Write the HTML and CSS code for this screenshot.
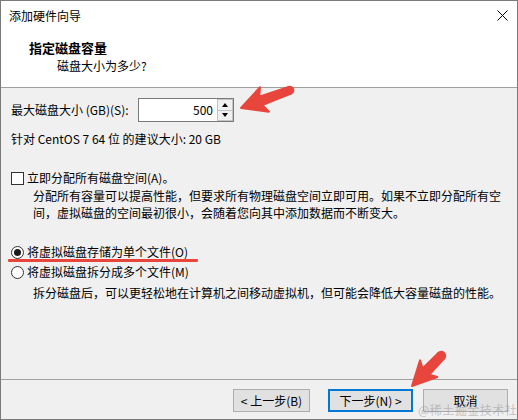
FILE: index.html
```html
<!DOCTYPE html>
<html lang="zh-CN">
<head>
    <meta charset="UTF-8">
    <link rel="stylesheet" href="styles.css">
</head>
<body>
    <div class="window">
        <div class="titlebar">
            <span class="title">添加硬件向导</span>
            <svg class="close-icon" width="11" height="11" viewBox="0 0 11 11">
                <path d="M0.5 0.5 L10.5 10.5 M10.5 0.5 L0.5 10.5" stroke="#000" stroke-width="1"/>
            </svg>
        </div>

        <div class="header">
            <div class="heading">指定磁盘容量</div>
            <div class="subheading">磁盘大小为多少?</div>
        </div>

        <div class="content">
            <div class="size-row">
                <span class="size-label">最大磁盘大小 (GB)(S):</span>
                <div class="spin">
                    <div class="spin-value">500</div>
                    <div class="spin-buttons">
                        <span class="spin-btn"><i class="tri-up"></i></span>
                        <span class="spin-btn"><i class="tri-down"></i></span>
                    </div>
                </div>
            </div>
            <div class="hint">针对 CentOS 7 64 位 的建议大小: 20 GB</div>

            <div class="option check-option">
                <span class="checkbox"></span>立即分配所有磁盘空间(A)。
            </div>
            <p class="desc">分配所有容量可以提高性能，但要求所有物理磁盘空间立即可用。如果不立即分配所有空<br>间，虚拟磁盘的空间最初很小，会随着您向其中添加数据而不断变大。</p>

            <div class="option radio-option first-radio">
                <span class="radio checked"></span>将虚拟磁盘存储为单个文件(O)
            </div>
            <div class="option radio-option">
                <span class="radio"></span>将虚拟磁盘拆分成多个文件(M)
            </div>
            <p class="desc desc-split">拆分磁盘后，可以更轻松地在计算机之间移动虚拟机，但可能会降低大容量磁盘的性能。</p>
        </div>

        <div class="footer">
            <button class="btn btn-back">&lt; 上一步(B)</button>
            <button class="btn btn-next">下一步(N) &gt;</button>
            <button class="btn btn-cancel">取消</button>
        </div>
    </div>

    <!-- red marks drawn over the screenshot -->
    <svg class="annotations" width="518" height="420" viewBox="0 0 518 420">
        <g fill="#e8453c" stroke="#e8453c" stroke-width="2" stroke-linejoin="round">
            <g transform="translate(241 108) rotate(-20)">
                <polygon points="0,0 25,-13 21,-4.5 52,-3.5 52,3.5 21,4.5 25,13"/>
                <circle cx="52" cy="0" r="3.5"/>
            </g>
            <g transform="translate(412 386) rotate(-46)">
                <polygon points="0,0 24,-12 20,-4.5 42,-4 42,4 20,4.5 24,12"/>
                <circle cx="42" cy="0" r="4"/>
            </g>
        </g>
        <rect x="8" y="259" width="190" height="3" rx="1" fill="#e8453c"/>
    </svg>

    <div class="watermark">@稀土掘金技术社区</div>
</body>
</html>
```

FILE: styles.css
```css
* {
    margin: 0;
    padding: 0;
    box-sizing: border-box;
}

body {
    font-family: "Noto Sans CJK SC", "Noto Sans", sans-serif;
    font-size: 12px;
    color: #000;
    background: #fff;
    width: 518px;
    height: 420px;
    overflow: hidden;
    position: relative;
}

.window {
    width: 518px;
    height: 420px;
    border: 1px solid #7a7a7a;
    display: flex;
    flex-direction: column;
    background: #f0f0f0;
}

.titlebar {
    height: 29px;
    display: flex;
    align-items: center;
    padding: 0 9px 0 8px;
    background: #fff;
    line-height: 18px;
}

.close-icon {
    margin-left: auto;
    margin-top: 0;
}

.header {
    height: 58px;
    background: #fff;
    border-bottom: 1px solid #a0a0a0;
    padding-top: 9px;
    line-height: 18px;
}

.heading {
    font-weight: bold;
    font-size: 13px;
    padding-left: 28px;
}

.subheading {
    padding-left: 56px;
}

.content {
    flex: 1;
    padding: 10px 10px 0 10px;
    line-height: 18px;
}

.size-row {
    display: flex;
    align-items: center;
    height: 24px;
}

.size-label {
    width: 127px;
}

.spin {
    display: flex;
    width: 96px;
    height: 24px;
    border: 1px solid #7a7a7a;
    background: #fff;
}

.spin-value {
    flex: 1;
    text-align: right;
    padding-right: 4px;
    line-height: 22px;
}

.spin-buttons {
    width: 16px;
    display: flex;
    flex-direction: column;
}

.spin-btn {
    flex: 1;
    display: flex;
    align-items: center;
    justify-content: center;
    background: #f0f0f0;
    border: 1px solid #c4c4c4;
}

.spin-btn + .spin-btn {
    border-top: none;
}

.tri-up,
.tri-down {
    width: 0;
    height: 0;
    border-left: 3.5px solid transparent;
    border-right: 3.5px solid transparent;
}

.tri-up {
    border-bottom: 4px solid #000;
}

.tri-down {
    border-top: 4px solid #000;
}

.hint {
    margin-top: 8px;
}

.option {
    display: flex;
    align-items: center;
}

.check-option {
    margin-top: 21px;
}

.checkbox {
    width: 13px;
    height: 13px;
    border: 1px solid #333;
    background: #fff;
    margin-right: 3px;
}

.desc {
    margin-left: 22px;
    line-height: 17px;
}

.radio-option {
    line-height: 20px;
}

.first-radio {
    margin-top: 21px;
}

.radio {
    width: 13px;
    height: 13px;
    border: 1px solid #333;
    border-radius: 50%;
    background: #fff;
    margin-right: 3px;
    display: flex;
    align-items: center;
    justify-content: center;
}

.radio.checked::after {
    content: "";
    width: 7px;
    height: 7px;
    border-radius: 50%;
    background: #1a1a1a;
}

.desc-split {
    margin-top: 2px;
}

.footer {
    height: 40px;
    border-top: 1px solid #a0a0a0;
    padding: 9px 9px 0 0;
    display: flex;
    justify-content: flex-end;
    align-items: flex-start;
}

.btn {
    font-family: inherit;
    font-size: 12px;
    height: 23px;
    width: 85px;
    background: #e1e1e1;
    border: 1px solid #adadad;
    color: #000;
}

.btn-back {
    width: 77px;
    margin-right: 18px;
}

.btn-next {
    border: 2px solid #0078d7;
    margin-right: 10px;
}

.annotations {
    position: absolute;
    top: 0;
    left: 0;
    pointer-events: none;
}

.watermark {
    position: absolute;
    left: 418px;
    top: 402px;
    font-size: 12px;
    line-height: 16px;
    color: rgba(150, 150, 150, 0.55);
    letter-spacing: 0.5px;
}
```
